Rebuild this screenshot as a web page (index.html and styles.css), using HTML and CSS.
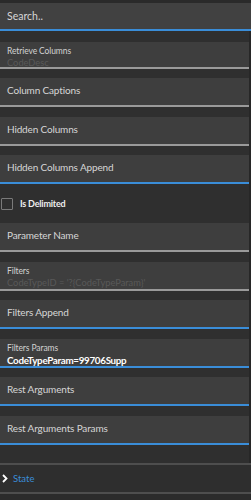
FILE: index.html
```html
<!DOCTYPE html>
<html lang="en">
<head>
    <meta charset="UTF-8">
    <meta name="viewport" content="width=device-width, initial-scale=1.0">
    <title>Properties</title>
    <link rel="stylesheet" href="styles.css">
</head>
<body>
    <div class="top">
        <div class="search">Search..</div>
    </div>
    <div class="panel">
        <div class="list">
            <div class="field field-two grey first">
                <div class="label">Retrieve Columns</div>
                <div class="value muted">CodeDesc</div>
            </div>
            <div class="field grey"><div class="text">Column Captions</div></div>
            <div class="field grey"><div class="text">Hidden Columns</div></div>
            <div class="field blue"><div class="text">Hidden Columns Append</div></div>
            <div class="check-row">
                <span class="checkbox"></span>
                <span class="check-label">Is Delimited</span>
            </div>
            <div class="field grey"><div class="text">Parameter Name</div></div>
            <div class="field field-two grey">
                <div class="label">Filters</div>
                <div class="value muted">CodeTypeID = '?{CodeTypeParam}'</div>
            </div>
            <div class="field blue"><div class="text">Filters Append</div></div>
            <div class="field field-two blue">
                <div class="label">Filters Params</div>
                <div class="value strong">CodeTypeParam=99706Supp</div>
            </div>
            <div class="field blue"><div class="text">Rest Arguments</div></div>
            <div class="field blue"><div class="text">Rest Arguments Params</div></div>
        </div>
        <div class="scroll"></div>
    </div>
    <div class="section">
        <svg class="chevron" width="6" height="9" viewBox="0 0 6 9">
            <path d="M1 1 L4.5 4.5 L1 8" fill="none" stroke="#ffffff" stroke-width="1.8"/>
        </svg>
        <span class="section-title">State</span>
    </div>
</body>
</html>
```

FILE: styles.css
```css
* {
    box-sizing: border-box;
}
body {
    margin: 0;
    background-color: #2b2b2b;
    font-family: Lato, "Noto Sans", sans-serif;
    width: 251px;
    height: 500px;
    overflow: hidden;
}
.top {
    padding-top: 3px;
    background-color: #2a2a2a;
}
.search {
    height: 28px;
    line-height: 26px;
    padding-left: 7px;
    background-color: #414141;
    border-bottom: 2px solid #3a8dd8;
    color: #d6d6d6;
    font-size: 10.5px;
}
.panel {
    display: flex;
    background-color: #2f2f2f;
    height: 432px;
}
.list {
    flex: 1;
    display: flex;
    flex-direction: column;
    gap: 9.5px;
    padding-top: 10.5px;
}
.scroll {
    width: 2px;
    background-color: #272727;
}
.field {
    height: 29px;
    padding-left: 7px;
    padding-bottom: 3px;
    background-color: #3e3e3e;
    display: flex;
    flex-direction: column;
    justify-content: center;
}
.field.first {
    height: 27px;
}
.field.grey {
    border-bottom: 2px solid #9a9a9a;
}
.field.blue {
    border-bottom: 2px solid #3a8dd8;
}
.field-two {
    justify-content: flex-start;
    padding-top: 3px;
    padding-bottom: 0;
}
.text {
    color: #d6d6d6;
    font-size: 10px;
    letter-spacing: -0.15px;
}
.label {
    color: #d2d2d2;
    font-size: 8.5px;
    letter-spacing: -0.1px;
    line-height: 12px;
}
.value {
    font-size: 9.3px;
    line-height: 12px;
}
.muted {
    color: #595959;
}
.strong {
    color: #ffffff;
    font-weight: bold;
    font-size: 9.8px;
    letter-spacing: -0.3px;
}
.check-row {
    height: 20px;
    display: flex;
    align-items: center;
    gap: 7px;
    padding-left: 1px;
}
.checkbox {
    width: 12px;
    height: 12px;
    border: 1px solid #7a7a7a;
    border-radius: 1px;
}
.check-label {
    color: #eeeeee;
    font-size: 9px;
    font-weight: bold;
    letter-spacing: -0.2px;
}
.section {
    height: 31px;
    border-top: 2px solid #4e4e4e;
    border-bottom: 2px solid #4e4e4e;
    background-color: #2e2e2e;
    display: flex;
    align-items: center;
    gap: 5px;
    padding-left: 2px;
}
.section-title {
    color: #3a8dd8;
    font-size: 9.5px;
}
```
